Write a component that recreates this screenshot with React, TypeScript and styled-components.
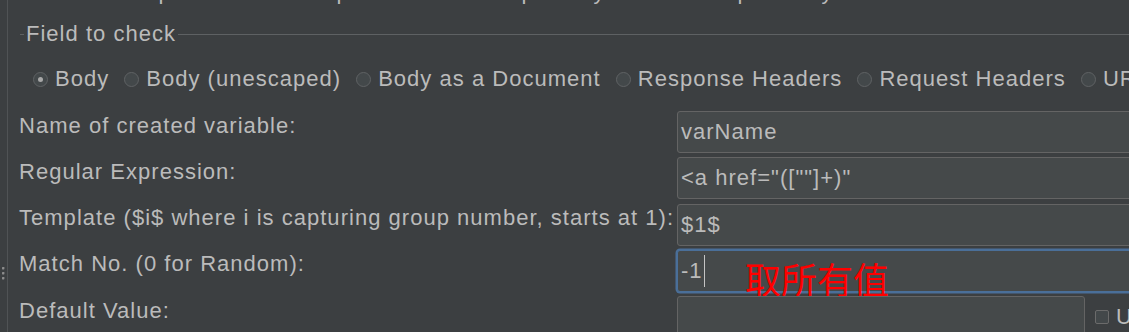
import React from 'react';
import styled, { createGlobalStyle } from 'styled-components';

const Colors = {
    bg: '#3c3f41',
    text: '#bbbbbb',
    line: '#5e6163',
    rail: '#505355',
    field: '#45494a',
    fieldBorder: '#646464',
    focus: '#4a6f99',
    red: '#ff0000',
};

const GlobalStyle = createGlobalStyle`
    html, body {
        margin: 0;
        padding: 0;
        background: ${Colors.bg};
        overflow: hidden;
    }
    body {
        font-family: "Liberation Sans", Arial, sans-serif;
        font-size: 22px;
        letter-spacing: 1.02px;
        color: ${Colors.text};
    }
`;

const applyTo = ['Main sample and sub-samples', 'Main sample only', 'Sub-samples only', 'JMeter Variable Name to use'];
const fieldToCheck = ['Body', 'Body (unescaped)', 'Body as a Document', 'Response Headers', 'Request Headers', 'URL', 'Response Code'];

export default function App() {
    return (
        <Page>
            <GlobalStyle />
            <SideRail>
                <DragHandle width="3" height="13" viewBox="0 0 3 13">
                    <rect x="0" y="0" width="2.4" height="2.4" rx="0.6" />
                    <rect x="0" y="5" width="2.4" height="2.4" rx="0.6" />
                    <rect x="0" y="10" width="2.4" height="2.4" rx="0.6" />
                </DragHandle>
            </SideRail>
            <Main>
                <CutRow>
                    {applyTo.map((label) => (
                        <RadioItem key={label}>
                            <Radio />
                            {label}
                        </RadioItem>
                    ))}
                </CutRow>

                <TitledBorder>
                    <BorderStub />
                    <Title>Field to check</Title>
                    <BorderLine />
                </TitledBorder>

                <RadioRow>
                    {fieldToCheck.map((label, i) => (
                        <RadioItem key={label}>
                            <Radio $checked={i === 0} />
                            {label}
                        </RadioItem>
                    ))}
                </RadioRow>

                <Form>
                    <Label>Name of created variable:</Label>
                    <FieldCell>
                        <TextField>varName</TextField>
                    </FieldCell>

                    <Label>Regular Expression:</Label>
                    <FieldCell>
                        <TextField>{'<a href="([""]+)"'}</TextField>
                    </FieldCell>

                    <Label>Template ($i$ where i is capturing group number, starts at 1):</Label>
                    <FieldCell>
                        <TextField>$1$</TextField>
                    </FieldCell>

                    <Label>Match No. (0 for Random):</Label>
                    <FieldCell>
                        <TextField $focused>
                            -1<Caret />
                        </TextField>
                        <Note>取所有值</Note>
                    </FieldCell>

                    <Label>Default Value:</Label>
                    <FieldCell>
                        <TextField $width={408} />
                        <CheckItem>
                            <CheckBox />
                            Use empty default value
                        </CheckItem>
                    </FieldCell>
                </Form>
            </Main>
        </Page>
    );
}

const Page = styled.div`
    display: flex;
    width: 1129px;
    height: 332px;
    overflow: hidden;
`;

const SideRail = styled.div`
    flex: 0 0 8px;
    border-right: 1px solid ${Colors.rail};
    padding-top: 267px;
    padding-left: 2px;
    box-sizing: border-box;
`;

const DragHandle = styled.svg`
    display: block;
    fill: #8d8d8d;
`;

const Main = styled.div`
    flex: 1;
    min-width: 0;
    display: flex;
    flex-direction: column;
`;

const CutRow = styled.div`
    display: flex;
    gap: 15px;
    margin-top: -20px;
    padding-left: 25px;
    line-height: 24px;
    white-space: nowrap;
`;

const TitledBorder = styled.div`
    display: flex;
    align-items: center;
    margin-top: 18px;
    margin-left: 12px;
    height: 24px;
    line-height: 24px;
`;

const BorderStub = styled.div`
    width: 4px;
    height: 1px;
    background: ${Colors.line};
`;

const Title = styled.span`
    padding: 0 2px;
    white-space: nowrap;
`;

const BorderLine = styled.div`
    flex: 1;
    height: 1px;
    background: ${Colors.line};
`;

const RadioRow = styled.div`
    display: flex;
    gap: 15px;
    margin-top: 21px;
    padding-left: 25px;
    height: 24px;
    line-height: 24px;
    white-space: nowrap;
`;

const RadioItem = styled.label`
    display: flex;
    align-items: center;
    gap: 7px;
    flex: none;
`;

const Radio = styled.span<{ $checked?: boolean }>`
    position: relative;
    width: 15px;
    height: 15px;
    box-sizing: border-box;
    border-radius: 50%;
    border: 1px solid #5f6264;
    background: #43484a;
    flex: none;

    &::after {
        content: '';
        display: ${(p) => (p.$checked ? 'block' : 'none')};
        position: absolute;
        left: 50%;
        top: 50%;
        width: 5px;
        height: 5px;
        margin: -2.5px 0 0 -2.5px;
        border-radius: 50%;
        background: #a8a8a8;
    }
`;

const Form = styled.div`
    display: grid;
    grid-template-columns: 658px 1fr;
    grid-auto-rows: 42px;
    row-gap: 4.25px;
    margin-top: 20px;
    padding-left: 11px;
    width: 1160px;
    box-sizing: border-box;
`;

const Label = styled.div`
    padding-top: 2.5px;
    line-height: 24px;
    white-space: nowrap;
`;

const FieldCell = styled.div`
    position: relative;
    display: flex;
    align-items: center;
    gap: 10px;
`;

const TextField = styled.div<{ $focused?: boolean; $width?: number }>`
    display: flex;
    align-items: center;
    box-sizing: border-box;
    height: 42px;
    ${(p) => (p.$width ? `width: ${p.$width}px; flex: none;` : 'flex: 1;')}
    padding: 0 3px;
    background: ${Colors.field};
    border: 1px solid ${(p) => (p.$focused ? Colors.focus : Colors.fieldBorder)};
    border-radius: 3px;
    box-shadow: ${(p) => (p.$focused ? `0 0 0 1.5px ${Colors.focus}` : 'none')};
    line-height: 24px;
    white-space: nowrap;
`;

const Caret = styled.span`
    display: inline-block;
    width: 0;
    height: 32px;
    margin-left: 1px;
    border-left: 1px solid #c4c4c4;
`;

const Note = styled.span`
    position: absolute;
    left: 68px;
    top: 10px;
    font-family: "Noto Sans CJK SC", sans-serif;
    font-size: 36px;
    line-height: 1;
    letter-spacing: 0;
    color: ${Colors.red};
    pointer-events: none;
`;

const CheckItem = styled.label`
    display: flex;
    align-items: center;
    gap: 7px;
    white-space: nowrap;
    line-height: 24px;
`;

const CheckBox = styled.span`
    width: 14px;
    height: 14px;
    box-sizing: border-box;
    border: 1px solid #6b6b6b;
    border-radius: 2px;
    background: #43484a;
    flex: none;
`;
